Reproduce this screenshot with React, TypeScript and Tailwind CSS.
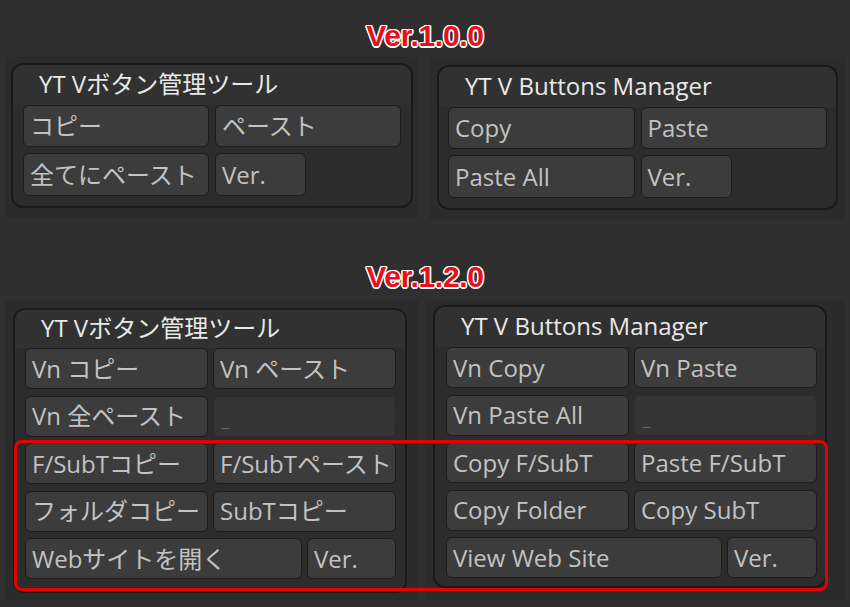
import type { ReactNode } from "react";

type Btn = { label: string; disabled?: boolean };

const outline =
  "[text-shadow:-1px_-1px_0_#fff,1px_-1px_0_#fff,-1px_1px_0_#fff,1px_1px_0_#fff,0_-1.5px_0_#fff,0_1.5px_0_#fff,-1.5px_0_0_#fff,1.5px_0_0_#fff]";

function Heading({ children }: { children: ReactNode }) {
  return (
    <div className="flex justify-center">
      <span
        className={`font-['Liberation_Sans',Arial,sans-serif] text-[30px] font-bold leading-[30px] tracking-[-0.3px] text-[#e8101a] ${outline}`}
      >
        {children}
      </span>
    </div>
  );
}

function Button({ label, disabled }: Btn) {
  if (disabled) {
    return (
      <div className="flex h-full items-end rounded-[6px] border-[1.5px] border-[#2c2c2c] bg-[#353535] pb-[7px] pl-[8px] text-[16px] leading-none text-[#6a6a6a]">
        _
      </div>
    );
  }
  return (
    <div className="flex h-full items-center overflow-hidden whitespace-nowrap rounded-[6px] border-[1.5px] border-[#1c1c1c] bg-[#3c3c3c] pl-[6px] text-[24px] leading-none text-[#c2c2c2]">
      {label}
    </div>
  );
}

function Panel({
  title,
  className,
  titleH,
  pad,
  children,
}: {
  title: string;
  className: string;
  titleH: string;
  pad: string;
  children: ReactNode;
}) {
  return (
    <div
      className={`overflow-hidden rounded-[12px] border-2 border-[#1a1a1a] bg-[#2c2c2c] ${className}`}
    >
      <div
        className={`flex items-center bg-[#313131] pl-[26px] text-[24px] leading-none text-[#e8e8e8] ${titleH}`}
      >
        {title}
      </div>
      <div className={pad}>{children}</div>
    </div>
  );
}

function OldGrid({ a, b, c }: { a: string; b: string; c: string }) {
  return (
    <div className="flex flex-col gap-[6px]">
      <div className="grid h-[42px] grid-cols-2 gap-[6px]">
        <Button label={a} />
        <Button label={b} />
      </div>
      <div className="grid h-[43px] grid-cols-[1fr_1fr] gap-[6px]">
        <Button label={c} />
        <div className="w-[91px]">
          <Button label="Ver." />
        </div>
      </div>
    </div>
  );
}

function NewGrid({ rows, last, verW }: { rows: Btn[][]; last: string; verW: string }) {
  return (
    <div className="flex flex-col gap-[6.5px]">
      {rows.map((r, i) => (
        <div key={i} className="grid h-[41px] grid-cols-2 gap-[5px]">
          {r.map((b, j) => (
            <Button key={j} {...b} />
          ))}
        </div>
      ))}
      <div className={`grid h-[41px] gap-[5px] ${verW}`}>
        <Button label={last} />
        <Button label="Ver." />
      </div>
    </div>
  );
}

export default function App() {
  return (
    <div className="relative h-[607px] w-[850px] overflow-hidden bg-[#2f2f2f] font-['Open_Sans','Noto_Sans_CJK_JP',sans-serif]">
      <div className="pt-[21px]">
        <Heading>Ver.1.0.0</Heading>
      </div>

      <div className="mt-[6px] flex pl-[5px]">
        <div className="h-[161px] w-[413px] bg-[#2b2b2b] px-[6px] pt-[6px]">
          <Panel
            title="YT Vボタン管理ツール"
            className="h-[145px] w-[402px]"
            titleH="h-[40px] pb-[2px]"
            pad="px-[10px]"
          >
            <OldGrid a="コピー" b="ペースト" c="全てにペースト" />
          </Panel>
        </div>
        <div className="ml-[12px] h-[163px] w-[415px] bg-[#2b2b2b] pl-[7px] pt-[8px]">
          <Panel
            title="YT V Buttons Manager"
            className="h-[145px] w-[401px]"
            titleH="h-[40px] pb-[2px]"
            pad="px-[9px]"
          >
            <OldGrid a="Copy" b="Paste" c="Paste All" />
          </Panel>
        </div>
      </div>

      <div className="mt-[42px]">
        <Heading>Ver.1.2.0</Heading>
      </div>

      <div className="mt-[8px] flex pl-[5px]">
        <div className="h-[300px] w-[413px] bg-[#2b2b2b] pl-[8px] pt-[8px]">
          <Panel
            title="YT Vボタン管理ツール"
            className="h-[285px] w-[394px]"
            titleH="h-[38px] pb-[2px]"
            pad="pl-[10px] pr-[9px]"
          >
            <NewGrid
              verW="grid-cols-[1fr_89px]"
              rows={[
                [{ label: "Vn コピー" }, { label: "Vn ペースト" }],
                [{ label: "Vn 全ペースト" }, { label: "", disabled: true }],
                [{ label: "F/SubTコピー" }, { label: "F/SubTペースト" }],
                [{ label: "フォルダコピー" }, { label: "SubTコピー" }],
              ]}
              last="Webサイトを開く"
            />
          </Panel>
        </div>
        <div className="ml-[7px] h-[300px] w-[420px] bg-[#2b2b2b] pl-[8px] pt-[5px]">
          <Panel
            title="YT V Buttons Manager"
            className="h-[283px] w-[394px]"
            titleH="h-[40px] pb-[2px]"
            pad="pl-[11px] pr-[8px]"
          >
            <NewGrid
              verW="grid-cols-[1fr_90px]"
              rows={[
                [{ label: "Vn Copy" }, { label: "Vn Paste" }],
                [{ label: "Vn Paste All" }, { label: "", disabled: true }],
                [{ label: "Copy F/SubT" }, { label: "Paste F/SubT" }],
                [{ label: "Copy Folder" }, { label: "Copy SubT" }],
              ]}
              last="View Web Site"
            />
          </Panel>
        </div>
      </div>

      <div className="pointer-events-none absolute left-[14px] top-[440px] h-[151px] w-[814px] rounded-[8px] border-[3px] border-[#e60000]" />
    </div>
  );
}
